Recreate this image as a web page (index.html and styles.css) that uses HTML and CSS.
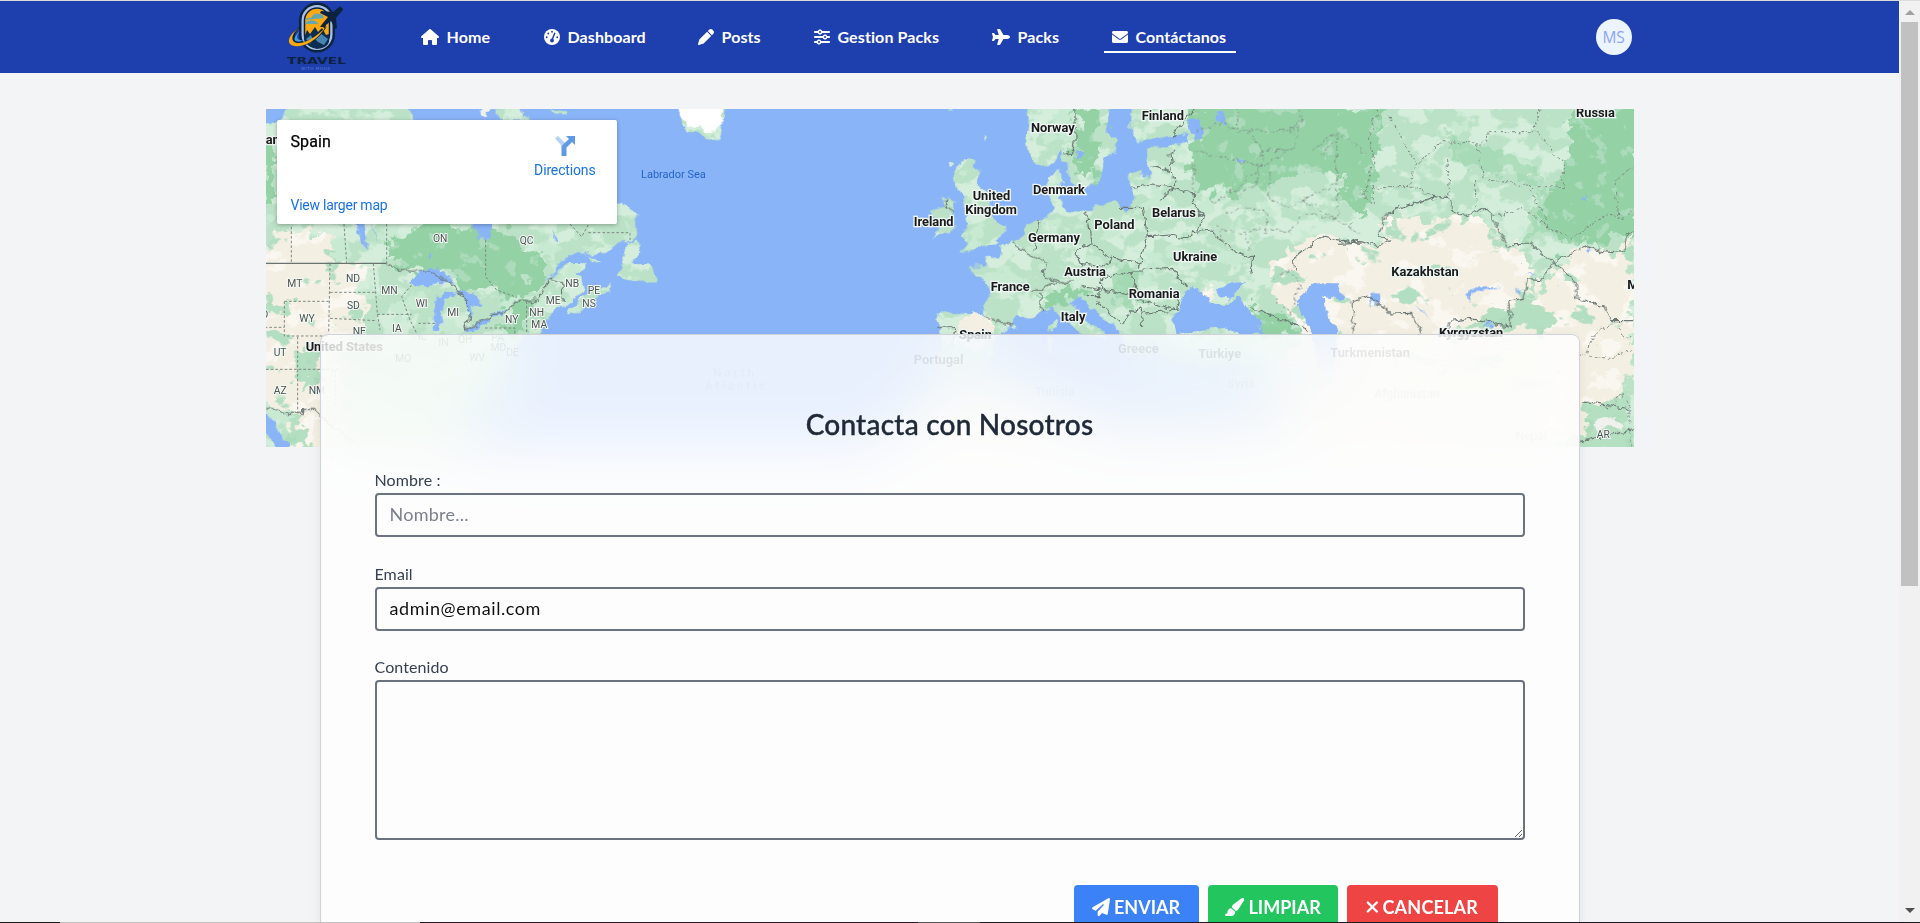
FILE: index.html
```html
<!DOCTYPE html>
<html lang="es">
<head>
<meta charset="utf-8">
<title>Contáctanos</title>
<link rel="stylesheet" href="styles.css">
</head>
<body>
<div class="page">
<div class="content">
<nav class="nav">
  <div class="nav-inner">
    <svg class="logo" viewBox="0 0 90 74">
      <rect x="29" y="3.500" width="36" height="50" rx="18" fill="#0c2340"/>
      <rect x="31.500" y="6" width="31" height="45" rx="15.500" fill="#a9c3e8"/>
      <rect x="34.500" y="9" width="25" height="39" rx="12.500" fill="#fba811" stroke="#0c2340" stroke-width="1.500"/>
      <path d="M35 21q2-3 6-2q3-6 9-4q3 0 4 4q-9 1-19 2zM36 23q5-3 9-1q3 1 3 3H36z" fill="#65a9b0"/>
      <path d="M34 39l3-8 3 4 5-7 3 5 4-4 4 7 3-1v8q-2 6-12 7q-10-2-13-9z" fill="#0c2c50"/>
      <path d="M44 39l6-5 8 6-4 6-6-3zM36 40l5-4 2 5-3 4z" fill="#4786b0"/>
      <path d="M31 27C17 35 15 49 31 47C43 45 53 35 57 27C48 38 37 44 29 43C22 41 25 32 31 27z" fill="#0c2340"/>
      <path d="M29 29C15 38 16 49 30 47C39 46 49 38 55 29C47 37 36 45 27 44C20 43 21 35 29 29z" fill="#fba811"/>
      <path d="M30 32C20 41 25 45 34 41C29 42 24 40 30 32z" fill="#3da0dd"/>
      <path d="M72 9q2 1 0 3l-6 7 1 10-2 1-4-8-5 4-1 4-2-2-3 0 3-4 5-6-8-4 1-2 12 1 6-5q2-1 3 1z" fill="#0c2340"/>
      <text x="17" y="65" class="logo-name" textLength="59" lengthAdjust="spacingAndGlyphs">TRAVEL</text>
      <text x="31" y="71" class="logo-sub" textLength="29">WITH MOHA</text>
    </svg>
    <div class="links">
      <a class="link home"><svg viewBox="0 0 576 512"><path d="M575.8 255.500c0 18-15 32.100-32 32.100h-32l.7 160.200c0 2.700-.2 5.400-.5 8.100V472c0 22.100-17.900 40-40 40H392c-22.100 0-40-17.900-40-40V384c0-17.700-14.300-32-32-32H256c-17.700 0-32 14.300-32 32v88c0 22.100-17.900 40-40 40H104c-22.100 0-40-17.900-40-40V287.600H32c-18 0-32-14-32-32.100c0-9 3-17 10-24L266.400 8c7-7 15-8 22-8s15 2 21 7L564.800 231.500c8 7 12 15 11 24z"/></svg><span>Home</span></a>
      <a class="link dash"><svg viewBox="0 0 512 512"><circle cx="256" cy="256" r="256"/><g fill="#1e40af"><circle cx="256" cy="88" r="30"/><circle cx="136" cy="144" r="30"/><circle cx="88" cy="262" r="30"/><circle cx="424" cy="262" r="30"/><circle cx="256" cy="366" r="62"/><path d="M328 110l44 18-92 222-44-18z"/></g></svg><span>Dashboard</span></a>
      <a class="link posts"><svg viewBox="0 0 512 512"><path d="M362.700 19.300L314.300 67.700 444.300 197.700l48.400-48.400c25-25 25-65.500 0-90.500L453.300 19.300c-25-25-65.500-25-90.500 0zM291.700 90.300L58.600 323.500c-10.400 10.400-18 23.300-22.200 37.400L1 481.200C-1.500 489.700.8 498.800 7 505s15.300 8.500 23.700 6.100l120.300-35.400c14.100-4.200 27-11.800 37.400-22.200L421.700 220.300 291.700 90.300z"/></svg><span>Posts</span></a>
      <a class="link gestion"><svg viewBox="0 0 512 512"><path d="M0 416c0 17.700 14.300 32 32 32h54.700c12.300 28.300 40.500 48 73.300 48s61-19.700 73.300-48H480c17.700 0 32-14.300 32-32s-14.300-32-32-32H233.300c-12.300-28.300-40.500-48-73.300-48s-61 19.700-73.300 48H32c-17.700 0-32 14.300-32 32zm128 0a32 32 0 1 1 64 0 32 32 0 1 1-64 0zM320 256a32 32 0 1 1 64 0 32 32 0 1 1-64 0zm32-80c-32.800 0-61 19.700-73.300 48H32c-17.700 0-32 14.300-32 32s14.300 32 32 32h246.700c12.300 28.300 40.500 48 73.300 48s61-19.700 73.300-48H480c17.700 0 32-14.300 32-32s-14.300-32-32-32h-54.700c-12.300-28.300-40.500-48-73.300-48zM192 128a32 32 0 1 1 0-64 32 32 0 1 1 0 64zm73.300-64C253 35.700 224.800 16 192 16s-61 19.700-73.300 48H32C14.300 64 0 78.300 0 96s14.300 32 32 32h86.700c12.300 28.300 40.500 48 73.300 48s61-19.700 73.300-48H480c17.700 0 32-14.300 32-32s-14.300-32-32-32H265.300z"/></svg><span>Gestion Packs</span></a>
      <a class="link packs"><svg viewBox="0 0 576 512"><path d="M482.300 192c34.200 0 93.700 29 93.700 64c0 36-59.500 64-93.700 64H365.700L265.200 495.900c-5.700 10-16.300 16.100-27.800 16.100h-56.200c-10.600 0-18.300-10.200-15.400-20.400l49-171.600H112L68.800 377.600c-3 4-7.800 6.400-12.800 6.400H14c-7.800 0-14-6.300-14-14c0-1.300.2-2.600.5-3.900L32 256 .5 145.900c-.4-1.300-.5-2.600-.5-3.900c0-7.800 6.300-14 14-14h42c5 0 9.800 2.400 12.800 6.400L112 192h102.900l-49-171.600C162.900 10.200 170.600 0 181.200 0h56.200c11.500 0 22.100 6.200 27.800 16.100L365.700 192z"/></svg><span>Packs</span></a>
      <a class="link contact active"><svg viewBox="0 0 512 512"><path d="M48 64C21.500 64 0 85.500 0 112c0 15.100 7.100 29.300 19.200 38.400L236.800 313.600c11.400 8.500 27 8.500 38.400 0L492.800 150.400c12.100-9.100 19.200-23.300 19.200-38.400c0-26.500-21.500-48-48-48H48zM0 176V400c0 26.500 21.500 48 48 48H464c26.500 0 48-21.500 48-48V176L294.400 339.200c-22.800 17.100-54 17.100-76.800 0z"/></svg><span>Contáctanos</span></a>
    </div>
    <div class="avatar">MS</div>
  </div>
</nav>
<main class="main">
  <section class="map">
    <svg class="map-svg" viewBox="266 109 1368 338">
      <defs>
        <filter id="land" filterUnits="userSpaceOnUse" x="-60" y="0" width="4300" height="1080">
          <feTurbulence type="fractalNoise" baseFrequency="0.02" numOctaves="4" seed="4" result="n"/>
          <feDisplacementMap in="SourceGraphic" in2="n" scale="42" xChannelSelector="R" yChannelSelector="G" result="d"/>
          <feTurbulence type="fractalNoise" baseFrequency="0.011 0.014" numOctaves="5" seed="9" result="m"/>
          <feColorMatrix in="m" values="0 0 0 0 .655 0 0 0 0 .855 0 0 0 0 .71 14 0 0 0 -7" result="a"/>
          <feColorMatrix in="m" values="0 0 0 0 .58 0 0 0 0 .82 0 0 0 0 .65 0 16 0 0 -9.600" result="b"/>
          <feComposite in="a" in2="d" operator="in" result="a2"/>
          <feComposite in="b" in2="d" operator="in" result="b2"/>
          <feMerge><feMergeNode in="d"/><feMergeNode in="a2"/><feMergeNode in="b2"/></feMerge>
        </filter>
        <filter id="forest" filterUnits="userSpaceOnUse" x="-60" y="0" width="4300" height="1080" color-interpolation-filters="sRGB">
          <feTurbulence type="fractalNoise" baseFrequency="0.022" numOctaves="4" seed="2" result="n"/>
          <feDisplacementMap in="SourceGraphic" in2="n" scale="110" xChannelSelector="R" yChannelSelector="G" result="d"/>
          <feColorMatrix in="n" values="0 0 0 0 .67 0 0 0 0 .86 0 0 0 0 .73 0 0 14 0 -8.600" result="a"/>
          <feComposite in="a" in2="d" operator="in" result="a2"/>
          <feMerge><feMergeNode in="d"/><feMergeNode in="a2"/></feMerge>
        </filter>
        <filter id="dry" filterUnits="userSpaceOnUse" x="-60" y="0" width="4300" height="1080" color-interpolation-filters="sRGB">
          <feTurbulence type="fractalNoise" baseFrequency="0.025" numOctaves="4" seed="7" result="n"/>
          <feDisplacementMap in="SourceGraphic" in2="n" scale="90" xChannelSelector="R" yChannelSelector="G" result="d"/>
          <feTurbulence type="fractalNoise" baseFrequency="0.012 0.016" numOctaves="5" seed="12" result="m"/>
          <feColorMatrix in="m" values="0 0 0 0 .98 0 0 0 0 .965 0 0 0 0 .94 14 0 0 0 -7.900" result="a"/>
          <feColorMatrix in="m" values="0 0 0 0 .70 0 0 0 0 .87 0 0 0 0 .76 0 16 0 0 -10.400" result="b"/>
          <feComposite in="a" in2="d" operator="in" result="a2"/>
          <feComposite in="b" in2="d" operator="in" result="b2"/>
          <feMerge><feMergeNode in="d"/><feMergeNode in="a2"/><feMergeNode in="b2"/></feMerge>
        </filter>
        <filter id="rough" filterUnits="userSpaceOnUse" x="-60" y="0" width="4300" height="1080">
          <feTurbulence type="fractalNoise" baseFrequency="0.04" numOctaves="3" seed="5" result="n"/>
          <feDisplacementMap in="SourceGraphic" in2="n" scale="26" xChannelSelector="R" yChannelSelector="G"/>
        </filter>
      </defs>
      <rect x="266" y="109" width="1368" height="338" fill="#8ab4f8"/>
      <g transform="translate(260 100) scale(.33333)">
        <!-- land masses -->
        <g filter="url(#land)" color-interpolation-filters="sRGB" fill="#bbe2c6">
          <path d="M-20 90L60 60L90 10H430L470 60L900 200L1070 305L1100 315L1130 345L1135 400L1100 425L1060 450L1000 455L930 462L900 490L845 552L870 535L900 505L930 487H965L970 505L950 525L965 545L972 580L930 600L880 640L860 665L850 690L800 705L760 760L740 830L720 880L640 960L600 1020V1080H-20z"/>
          <path d="M1100 430L1130 415L1138 440L1120 480L1140 490L1170 490L1192 520L1190 555L1165 545L1130 540L1070 525L1090 480zM930 625L960 600L1000 580L1050 550V575L1000 602L960 640L935 637zM970 465L1020 480L990 487z"/>
          <path d="M710 30L750 27L820 60H710zM860 15L930 35L925 47L870 32z"/>
          <g transform="translate(1200 0)">
            <path d="M40 10H190V60L178 125L140 120L110 92L80 92L60 50z"/>
            <path d="M905 180L945 177L935 205L970 210L960 240L945 260L985 300L990 340L1010 365L1035 375V400L1010 415L1030 425L985 437L940 440L900 458L925 425L905 405L925 390L920 365L930 350L905 290L890 260L885 230z"/>
            <path d="M845 300L870 293L895 310L885 345V385L815 412L830 375L815 330L845 320zM870 185l15 5-5 12-12-4zM975 108l8 2-4 10zM866 33h9v8h-9zM1175 665h12l-2 30-14-2zM1165 710l22 0-4 50-16-5z"/>
          </g>
          <g transform="translate(2400 0)">
            <path d="M-90 10L-100 120L-85 190L-60 200L-20 185L5 150L20 195L40 260L60 265L100 250L125 240L130 180L155 160L165 130L140 100V10z"/>
            <path d="M215 10V100L240 120L300 115L375 105L390 125L290 145L258 150L270 190L275 225L250 230L240 215L210 230L210 260L222 300L190 325L160 310L110 320L80 340L20 330L0 300L-10 265L5 240L0 210L-35 245L-30 300L-15 325L-20 350L-60 355L-100 370L-105 395L-130 420L-170 440L-180 470L-230 472L-215 500L-285 500L-260 520L-225 545L-212 580L-225 645L-350 640L-370 655L-360 690L-365 800L-330 830L-250 830L-200 740L-190 700L-140 680L-130 655L-70 650L-20 620L0 650L40 680L80 705L130 720L120 695L80 670L40 605L50 585L80 610L120 640L160 665L180 690L190 760L260 780L280 720L300 760L400 800L620 800L650 900L640 1080H1800V10z"/>
            <path d="M-600 1080L-380 870L-100 850L-50 900L200 980L640 960V1080z"/>
          </g>
        </g>
        <!-- forest belts -->
        <g filter="url(#forest)" fill="#94d2a6">
          <path d="M380 430L470 372H680L850 470L860 520L780 590L700 580L580 540L400 500z"/>
          <path d="M690 680L790 600L850 620L780 700zM0 130H40V300H0z"/>
          <g transform="translate(2400 0)">
            <path d="M400 10H920V250L780 200L640 250L400 280L390 150zM60 10H120V220L60 240L40 150z"/>
            <path d="M220 510L250 600L240 620L170 590L160 490z" opacity=".6"/>
            <path d="M560 620L740 690L720 720L600 690z"/>
            <path d="M-60 590L20 560L80 580L-40 610z"/>
          </g>
          <g transform="translate(3240 0)">
            <path d="M0 10H130L110 240L50 380L0 260zM700 10H900V400L650 440L600 330L680 200z"/>
            <path d="M300 100L560 180L660 360L560 420L600 250L330 180z" opacity=".5"/>
          </g>
        </g>
        <!-- dry areas -->
        <g filter="url(#dry)" fill="#f4efe3">
          <path d="M25 400L110 385L150 420L200 400L230 440L210 475L240 490H340L290 560L330 620L300 700L240 760V1080H110L90 950L-20 900V490z"/>
          <g transform="translate(2400 0)">
            <path d="M-300 665L-200 650L-190 690L-260 760L-330 730z"/>
            <path d="M620 500L690 440L800 405L900 425L950 440L985 420L970 370L1040 350L1130 360L1240 340L1290 380L1340 430L1380 450L1420 530L1390 600L1520 480L1580 440L1660 460L1720 400V840L1600 1000L1300 1080H700L640 800L745 700L690 640L640 590z"/>
            <path d="M-600 1080L-380 870L-100 850L-50 900L200 980L640 960V1080zM400 560l60 10-10 30-50-20z"/>
          </g>
        </g>
        <g filter="url(#forest)" fill="#b4dfc1">
          <path d="M120 740L180 780L175 850L120 870zM80 960L150 980L160 1060H100zM30 600L90 610V650L40 640z"/>
          <path d="M3590 680L3700 630L3780 600L3900 650L3860 690L3760 675L3690 700zM3990 920L4100 880L4140 1060H3970z"/>
        </g>
        <!-- ice -->
        <g filter="url(#rough)" fill="#fff">
          <path d="M1245 10H1390V65L1370 95L1345 100L1320 75L1290 88L1270 60z"/>
          <path d="M665 20h25l-8 36-10-8zM4000 960l70-10 20 40-40-12-40 20z" fill="#f0f0ec"/>
        </g>
        <!-- lakes and inland seas -->
        <g filter="url(#rough)" fill="#8ab4f8">
          <path d="M445 550L470 525L510 497L560 520L580 550L530 550L500 560L465 555zM525 690L520 640L530 590L575 575L595 580L555 600L545 650L540 690zM590 572L640 580L670 610L640 615L630 660L612 592zM608 692L650 672L692 655V665L625 697zM685 640L735 630L730 645L690 650z"/>
          <path d="M630 360L660 415L690 420L697 360zM283 360L305 430L325 452L310 370zM328 360L355 430L345 395zM500 455l12 5-6 20zM10 935L45 965L60 1000L100 1050H60L10 990zM880 380l8 50 8-4z"/>
          <g transform="translate(2400 0)">
            <path d="M340 665L352 635L375 575L400 560L440 590L460 612L490 612L540 595L560 630L600 660L607 700L540 705L490 685L420 690L350 705zM470 572L510 550L555 545L535 570L520 595L480 588z"/>
            <path d="M385 60L410 55L435 100L410 125L392 95zM465 30L490 35L500 80L475 60zM530 170L550 185L540 195zM45 150l25 10-20 20z"/>
            <path d="M705 600L760 550L830 550L855 600L790 590L800 640L835 690L820 850L780 860L755 700z"/>
          </g>
          <g transform="translate(3240 0)">
            <path d="M85 620L95 580L118 585L112 620L100 600zM375 590L395 560L480 558L400 575L392 602zM430 672L465 665L455 680H430zM525 565L540 575L535 580zM225 612L270 655L240 632zM740 440L755 450L745 460zM720 300l24-14-10 18zM560 515l30 12-15 0z"/>
          </g>
        </g>
        <!-- borders -->
        <g filter="url(#rough)" fill="none" stroke="#6b7773" stroke-width="3.500">
          <path d="M380 492L420 510L470 515L510 512L580 555L620 600L628 655L612 690L688 655L690 640H730L770 604L830 600L875 537L905 545L910 600M10 920L70 940H128V928H160L220 980L300 1040"/>
          <path d="M2048 320l18-20M2052 318l30 14M2035 685l50 0-8 60M2170 650l90 25M2255 430l50 35 55 20-10 48 50 10M2340 365l-15 85M2320 570l30 0 30-20 60-5M2340 580v40l15 15"/>
          <g transform="translate(2400 0)">
            <path d="M45 10V130L30 160L10 165M400 25L335 110M345 150L330 165L345 265L315 280L300 305M275 200L330 215M215 262L280 255L345 265L400 280V310L430 355L410 395M180 322H250L262 410L235 500M262 410L330 405L390 415L395 395L460 390L490 430L520 455L578 470L570 525M80 340L90 430L45 455L60 490L120 500L160 475L90 430M160 475L235 490M120 540L210 510L250 510L340 505L380 560M210 510L240 600L350 630L355 600M240 640L350 630M120 545L130 570L180 580L240 600M65 560L120 570V590L75 590M110 600L180 670L240 620M240 620L245 680M570 620L740 690M705 510L700 480L735 450L780 410L900 430"/>
          </g>
          <g transform="translate(3240 0)">
            <path d="M0 430L60 425L110 440L148 420L120 400L140 340L280 292L325 295L340 330L380 350L440 325L500 435L570 432L640 485L680 465L740 437L790 455L850 460L860 400L890 390M640 485L605 545L562 542L548 595L505 605L512 650L510 680L390 655L330 665L320 700M640 485L710 550V595L795 620L815 662H900M40 700V602L90 588L155 642L215 640L245 700M720 905L870 930M720 1025L880 990"/>
          </g>
        </g>
        <path d="M0 490H380" stroke="#68736f" stroke-width="4"/>
        <g fill="none" stroke="#7d8985" stroke-width="3" stroke-dasharray="8 6">
          <path d="M94 380V490M252 372L260 490M380 372V490M677 420V530L710 570L770 592M210 490L206 700M210 577H350M340 490L352 640L360 690M210 655L350 662M352 643H455M73 604H206M73 604V708H206M18 808H240M113 710V940M226 810V920M0 682H73M455 555L425 590L450 660L475 710M475 670H530M675 684H765V700M800 604V700M930 372L965 410L985 375M985 398H1110V420"/>
          <g transform="translate(2400 0)" filter="url(#rough)">
            <path d="M530 27V90L700 95L720 30M410 90L490 70L530 90M560 95L610 150L700 150L730 27M380 150L490 170L600 200L690 150M400 190V270L460 310L530 270L600 200M610 150L590 250L540 280M630 220V300L690 320L830 250L830 100L760 150M470 380L540 400L610 380L690 400L730 340L830 360L830 260M500 340L560 320L620 340V400M560 400L570 460M480 390L490 430M640 540L690 510L720 560L690 640L640 590M730 300L780 330L900 400M780 160L850 110L920 160"/>
          </g>
          <g transform="translate(3240 0)" filter="url(#rough)">
            <path d="M110 27L85 130L105 180L70 290L100 310V260L210 260M150 50L230 190L310 125L440 130L445 95L580 95L600 27M230 190L210 260L290 292M320 180L330 290M410 130L430 230L560 260L670 260V190L590 95M410 240V320M460 350L550 325L640 390L690 420L800 340L850 355L882 330M570 270L620 360M830 340L825 240L882 200M740 760L760 700L820 670L850 710L882 710M720 765L810 775L882 750M720 870M800 925L850 880L870 930V1040"/>
          </g>
        </g>
        <!-- labels -->
        <g class="state">
          <text x="519" y="427">ON</text><text x="779" y="433">QC</text><text x="258" y="547">ND</text><text x="82" y="562">MT</text><text x="364" y="582">MN</text><text x="261" y="627">SD</text><text x="467" y="622">WI</text><text x="562" y="648">MI</text><text x="118" y="667">WY</text><text x="396" y="695">IA</text><text x="278" y="705">NE</text><text x="735" y="669">NY</text><text x="808" y="647">NH</text><text x="814" y="684">MA</text><text x="857" y="613">ME</text><text x="916" y="561">NB</text><text x="983" y="581">PE</text><text x="967" y="622">NS</text><text x="41" y="767">UT</text><text x="41" y="882">AZ</text><text x="146" y="882">NM</text><text x="-4" y="654">ID</text><text x="4010" y="1013">AR</text>
        </g>
        <text class="sea" x="1143" y="233">Labrador Sea</text>
        <g class="country">
          <text x="-10" y="131">Canada</text><text x="135" y="753">United States</text>
          <text x="2311" y="95">Norway</text><text x="2643" y="59">Finland</text><text x="2317" y="283">Denmark</text><text x="2136" y="301">United</text><text x="2114" y="341">Kingdom</text><text x="1959" y="378">Ireland</text><text x="2302" y="426">Germany</text><text x="2501" y="386">Poland</text><text x="2674" y="350">Belarus</text><text x="2737" y="483">Ukraine</text><text x="2411" y="528">Austria</text><text x="2190" y="573">France</text><text x="2604" y="595">Romania</text><text x="2400" y="663">Italy</text><text x="2096" y="717">Spain</text><text x="3392" y="528">Kazakhstan</text><text x="3535" y="711">Kyrgyzstan</text><text x="3946" y="52">Russia</text><text x="4100" y="566">Mongolia</text>
        </g>
      </g>
    </svg>
    <div class="place">
      <div class="place-top"><div class="place-name">Spain</div>
        <div class="directions"><svg viewBox="0 0 22 20"><path d="M1 2.500L4 0L11 7L8 10z" fill="#b5d2f5"/><path d="M12 0H21V9L18 6L12.500 11.500V20H7.500V10L15 3z" fill="#5e9ae6"/></svg><span>Directions</span></div></div>
      <div class="larger">View larger map</div>
    </div>
  </section>
  <section class="card">
    <svg class="ghost" viewBox="321 335 1258 112">
      <g transform="translate(260 100) scale(.33333)">
        <g class="ghost-country"><text x="135" y="753">United States</text><text x="1963" y="792">Portugal</text><text x="2096" y="717">Spain</text><text x="2576" y="760">Greece</text><text x="2817" y="773">Türkiye</text><text x="3213" y="771">Turkmenistan</text><text x="3535" y="711">Kyrgyzstan</text></g>
        <g class="ghost-state"><text x="474" y="720">IL</text><text x="536" y="739">IN</text><text x="594" y="730">OH</text><text x="695" y="724">PA</text><text x="692" y="753">MD</text><text x="739" y="768">DE</text><text x="406" y="787">MO</text><text x="628" y="782">WV</text></g>
        <g class="ghost-far"><text x="2904" y="863">Syria</text><text x="3345" y="895">Afghanistan</text><text x="3770" y="1020">Nepal</text><text x="2327" y="888">Tunisia</text><text x="1360" y="832" letter-spacing="8">North</text><text x="1335" y="870" letter-spacing="8">Atlantic</text></g>
      </g>
    </svg>
    <h1 class="title">Contacta con Nosotros</h1>
    <form class="form">
      <label class="field"><span>Nombre :</span><input type="text" placeholder="Nombre..."></label>
      <label class="field"><span>Email</span><input class="email" type="text" value="admin@email.com"></label>
      <label class="field"><span>Contenido</span><textarea></textarea></label>
      <div class="actions">
        <button type="button" class="btn send"><svg viewBox="0 0 512 512"><path d="M498.100 5.600c10.100 7 15.400 19.100 13.500 31.200l-64 416c-1.500 9.700-7.400 18.200-16 23s-18.900 5.400-28 1.600L284 427.700l-68.500 74.100c-8.900 9.700-22.900 12.900-35.200 8.100S160 493.200 160 480V396.400c0-4 1.500-7.800 4.200-10.700L331.800 202.800c5.800-6.300 5.600-16-.4-22s-15.700-6.400-22-.7L106 360.800 17.700 316.600C7.100 311.300.3 300.700 0 288.900s5.900-22.800 16.100-28.700l448-256c10.700-6.100 23.900-5.500 34 1.400z"/></svg><span>ENVIAR</span></button>
        <button type="button" class="btn clean"><svg viewBox="0 0 576 512"><path d="M339.300 367.100c27.300-3.900 51.900-19.400 67.200-42.900L568.200 74.100c12.600-19.500 9.400-45.300-7.600-61.200S517.700-4.400 499.100 9.600L262.400 187.200c-24 18-38.200 46.100-38.400 76.100zM319.700 392.500l-116-104.400C143.900 290.300 96 339.600 96 400c0 3.900.2 7.800.6 11.600C98.400 429.100 86.400 448 68.800 448H64c-17.700 0-32 14.300-32 32s14.300 32 32 32H208c61.900 0 112-50.100 112-112c0-2.500-.1-5-.2-7.500z"/></svg><span>LIMPIAR</span></button>
        <button type="button" class="btn cancel"><svg viewBox="0 0 14 20"><path d="M2 5L12 15M12 5L2 15" stroke="#fff" stroke-width="2.700" stroke-linecap="round"/></svg><span>CANCELAR</span></button>
      </div>
    </form>
  </section>
</main>
</div>
<div class="scrollbar"><i class="up"></i><i class="thumb"></i><i class="down"></i></div>
</div>
<div class="bottom-line"></div>
</body>
</html>
```

FILE: styles.css
```css
* { box-sizing: border-box; }
body { margin: 0; height: 923px; overflow: hidden; background: #f3f4f6; font-family: Lato, "Open Sans", sans-serif; position: relative; }
.page { display: flex; height: 923px; border-top: 1px solid #dcdcdc; }
.content { width: 1899px; height: 922px; overflow: hidden; }
.nav { height: 72px; background: #1e40af; }
.nav-inner { display: flex; align-items: center; width: 1368px; height: 72px; margin: 0 auto; padding: 0 2px 0 4px; }
.logo { width: 90px; height: 74px; margin-top: -2px; flex: none; }
.logo-name { font: 700 9.500px "DejaVu Sans", sans-serif; fill: #0c2340; }
.logo-sub { font: 4px "DejaVu Sans", sans-serif; fill: #6f93d8; opacity: .7; }
.links { display: flex; gap: 37px; margin-left: 53px; }
.link { display: flex; flex: none; align-items: center; height: 29px; padding: 0 0 0 8px; border-bottom: 2px solid transparent; color: #fff; font-size: 16px; font-weight: 700; white-space: nowrap; margin-top: 2px; }
.link svg { height: 16px; margin-right: 8px; fill: #fff; flex: none; }
.link span { margin-top: -1px; letter-spacing: .1px; }
.active { border-color: #fff; }
.home { width: 86px; } .dash { width: 117px; } .posts { width: 79px; } .gestion { width: 141px; } .packs { width: 83px; } .contact { width: 132px; }
.avatar { width: 36px; height: 36px; margin-left: auto; border-radius: 50%; background: #ebf4ff; color: #8ea5f7; font: 15.500px/37px "Open Sans", sans-serif; text-align: center; letter-spacing: -.3px; }
.main { width: 1368px; margin: 36px auto 0; }
.map { position: relative; height: 338px; overflow: hidden; }
.map-svg { display: block; width: 1368px; height: 338px; }
.state { font: 31px Roboto, sans-serif; fill: #4b5552; stroke: #f4f8f4; stroke-width: 6; paint-order: stroke; }
.sea { font: 33px Roboto, sans-serif; fill: #2565c7; }
.country { font: 700 38.500px Roboto, sans-serif; fill: #1b1b1b; stroke: #eef6f4; stroke-width: 8; paint-order: stroke; transform: translateX(2px); }
.place { position: absolute; left: 11px; top: 11px; width: 340px; height: 104px; padding: 14px 21px 0 14px; background: #fff; border-radius: 2px; box-shadow: 0 1px 4px rgba(0,0,0,.3); font-family: Roboto, sans-serif; }
.place-top { display: flex; justify-content: space-between; height: 63px; }
.place-name { font-size: 16px; font-weight: 400; line-height: 16px; color: #000; -webkit-text-stroke: .25px #000; letter-spacing: .1px; }
.directions { display: flex; flex-direction: column; align-items: center; color: #1a73e8; font-size: 14px; line-height: 16px; letter-spacing: -.15px; }
.directions svg { width: 22px; height: 20px; margin: 2px 0 6px; }
.larger { color: #1a73e8; font-size: 14px; line-height: 16px; letter-spacing: -.25px; }
.card { position: relative; width: 1260px; height: 700px; margin: -113px auto 0; border: 1px solid #cfd2da; border-radius: 8px; padding: 71px 54px 0; background: rgba(255,255,255,.8); backdrop-filter: blur(30px); box-shadow: 0 2px 15px -3px rgba(0,0,0,.07), 0 10px 20px -2px rgba(0,0,0,.04); }
.ghost { position: absolute; left: 0; top: 0; width: 1257px; height: 112px; }
.ghost-country { font: 700 38.500px Roboto, sans-serif; fill: rgba(0,0,0,.085); }
.ghost-state { font: 31px Roboto, sans-serif; fill: rgba(0,0,0,.07); }
.ghost-far { font: 700 36px Roboto, sans-serif; fill: rgba(0,0,0,.018); }
.title { margin: 0 0 27px; font-size: 28px; font-weight: 500; line-height: 36px; color: #1f2937; text-align: center; letter-spacing: .22px; -webkit-text-stroke: .4px #1f2937; position: relative; }
.form { display: flex; flex-direction: column; gap: 25.500px; position: relative; }
.field { display: block; color: #374151; font-size: 16px; line-height: 24px; }
.field span { display: block; position: relative; top: -1px; letter-spacing: .1px; }
.field input, .field textarea { display: block; width: 100%; height: 44px; padding: 0 13px 2px; border: 2px solid #6b7280; border-radius: 4px; background: transparent; color: #111; font: 18px Lato, sans-serif; letter-spacing: .25px; outline: 0; }
.field .email { letter-spacing: .58px; }
.field textarea { height: 160px; resize: vertical; }
.field input::placeholder { color: #7b818d; opacity: 1; }
.actions { display: flex; justify-content: flex-end; gap: 9px; padding-right: 27px; margin-top: 19.500px; }
.btn { display: flex; align-items: center; justify-content: center; gap: 4px; height: 44px; padding: 0; border: 0; border-radius: 4px; color: #fff; font: 700 18px Lato, sans-serif; }
.btn svg { height: 18px; fill: #fff; }
.send { width: 125px; background: #3b82f6; }
.clean { width: 130px; background: #22c55e; }
.cancel { width: 151px; background: #ef4444; letter-spacing: .2px; }
.scrollbar { display: flex; flex-direction: column; align-items: center; width: 21px; height: 922px; background: #f1f1f1; padding: 9px 0 10px; }
.up, .down { border: 5px solid transparent; }
.up { border-top: 0; border-bottom-color: #a0a0a0; margin-bottom: 7px; }
.down { border-bottom: 0; border-top-color: #505050; margin-top: auto; }
.thumb { width: 17px; height: 564px; background: #c1c1c1; }
.bottom-line { position: absolute; left: 0; bottom: 0; width: 100%; height: 1px; background: linear-gradient(90deg, #1c1c1c 60px, #c0c0c0 60px 420px, #2a1520 420px 918px, #555 918px 980px, #1c1a22 980px); }
```
